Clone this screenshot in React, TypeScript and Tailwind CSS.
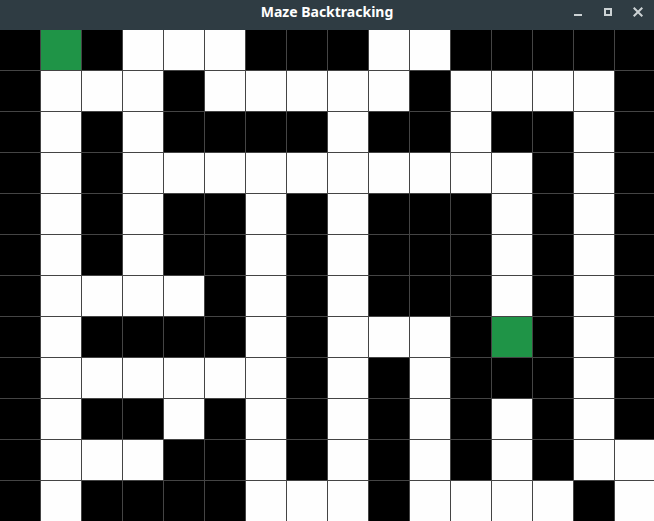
const MAZE = [
  "#G#...###..#####",
  "#...#.....#....#",
  "#.#.####.##.##.#",
  "#.#..........#.#",
  "#.#.##.#.###.#.#",
  "#.#.##.#.###.#.#",
  "#....#.#.###.#.#",
  "#.####.#...#G#.#",
  "#......#.#.###.#",
  "#.##.#.#.#.#.#.#",
  "#...##.#.#.#.#..",
  "#.####...#....#.",
];

const CELL_COLORS: Record<string, string> = {
  "#": "bg-black",
  ".": "bg-[#fefefe]",
  G: "bg-[#1f9447]",
};

const WINDOW_BUTTON = "flex h-6 w-[30px] items-center justify-center";

function TitleBar() {
  return (
    <header className="grid h-[30px] grid-cols-[1fr_auto_1fr] items-center bg-[#2f3c43] pb-1.5">
      <h1 className="col-start-2 font-['Noto_Sans',sans-serif] text-sm leading-6 font-bold text-white">
        Maze Backtracking
      </h1>
      <div className="flex justify-end pr-px text-[#ccd2d4]">
        <button type="button" aria-label="Minimize" className={WINDOW_BUTTON}>
          <svg width="10" height="10" viewBox="0 0 10 10" aria-hidden="true">
            <path d="M1 8h8" stroke="currentColor" strokeWidth="2" />
          </svg>
        </button>
        <button type="button" aria-label="Maximize" className={WINDOW_BUTTON}>
          <svg width="10" height="10" viewBox="0 0 10 10" aria-hidden="true">
            <path d="M2 2h6v6h-6z" fill="none" stroke="currentColor" strokeWidth="2" />
          </svg>
        </button>
        <button type="button" aria-label="Close" className={WINDOW_BUTTON}>
          <svg width="10" height="10" viewBox="0 0 10 10" aria-hidden="true">
            <path d="M.7.7l8.6 8.6M9.3.7L.7 9.3" stroke="currentColor" strokeWidth="2" />
          </svg>
        </button>
      </div>
    </header>
  );
}

export default function App() {
  return (
    <div className="overflow-hidden bg-black">
      <TitleBar />
      <main className="grid auto-rows-[40px] grid-cols-[repeat(15,40px)_1fr] gap-px bg-[#444444]">
        {MAZE.flatMap((row, y) =>
          row.split("").map((cell, x) => <div key={`${x}-${y}`} className={CELL_COLORS[cell]} />),
        )}
      </main>
    </div>
  );
}
